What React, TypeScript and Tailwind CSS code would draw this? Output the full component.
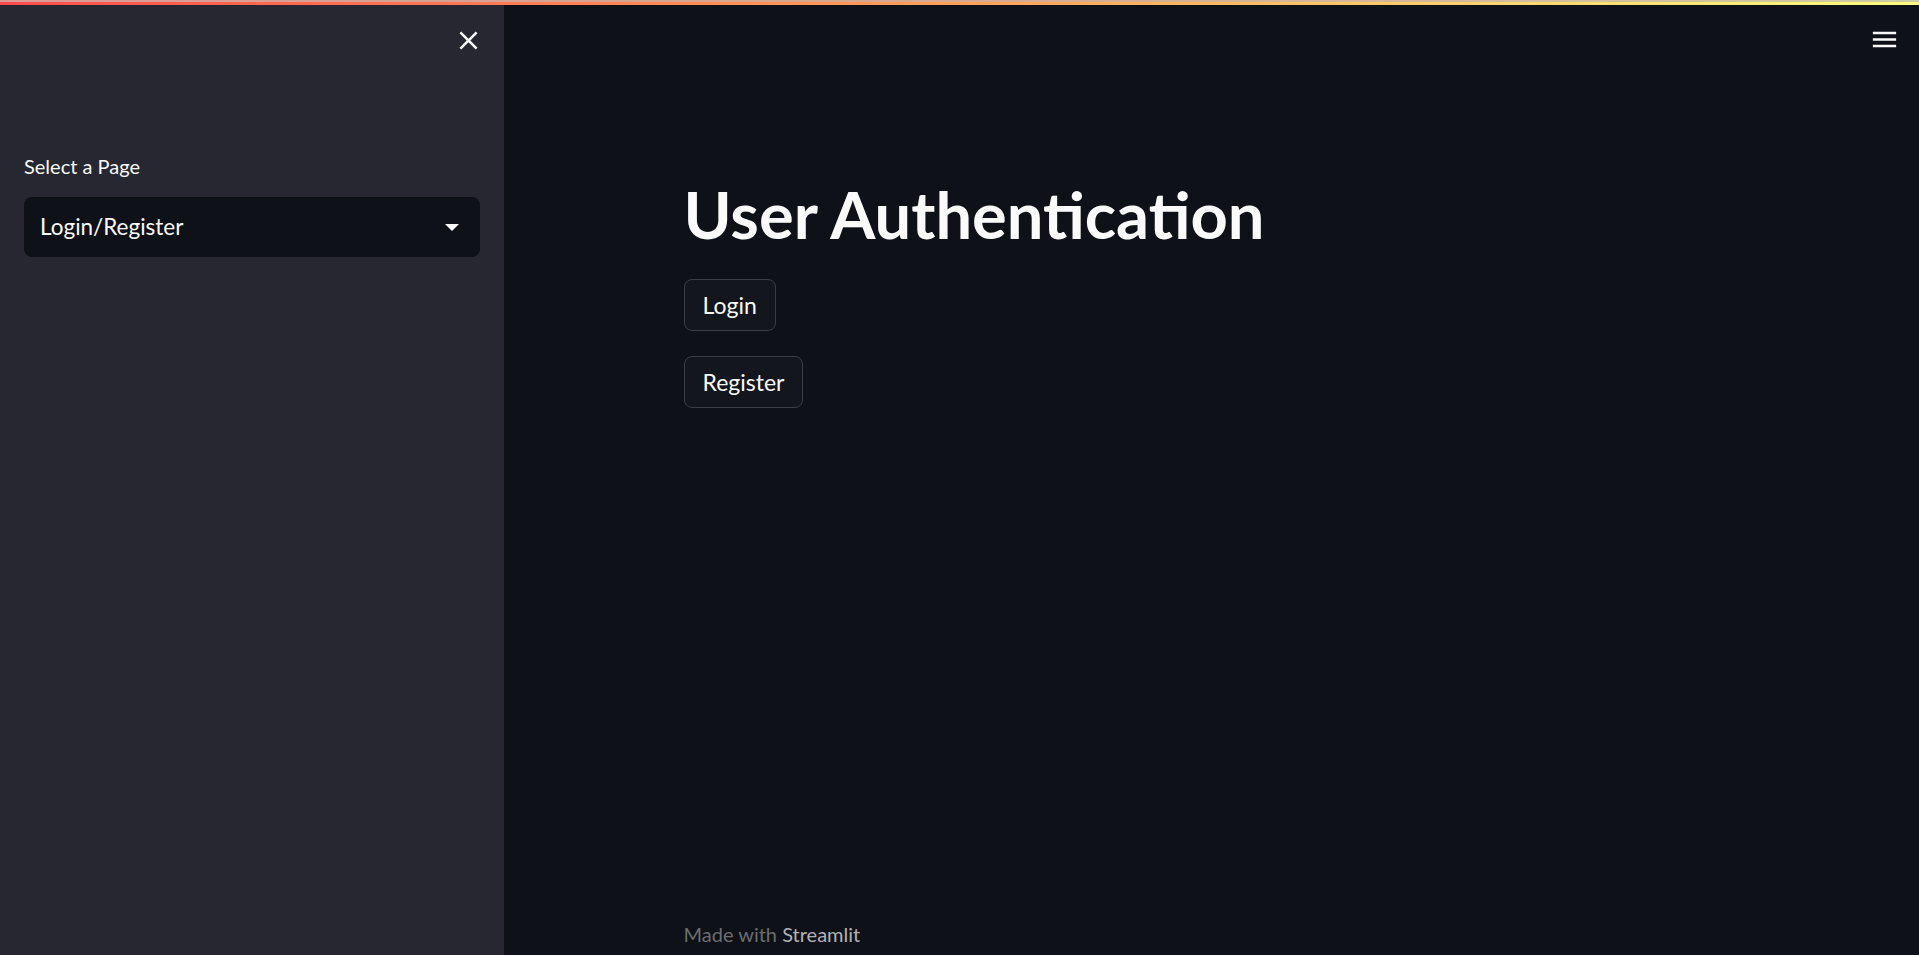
export default function App() {
  return (
    <div className="relative flex h-[955px] w-full overflow-hidden bg-[#0e1117] font-['Lato',sans-serif] text-[#fafafa]">
      {/* top decoration stripe */}
      <div className="absolute left-0 right-0 top-0 z-10 flex flex-col">
        <div className="h-[2px] bg-gradient-to-r from-[#d99c9a] via-[#d9a98f] to-[#cfcba0]" />
        <div className="h-[3px] bg-gradient-to-r from-[#ff4b4b] via-[#ffa05a] to-[#fffd80]" />
      </div>

      <aside className="flex w-[504px] shrink-0 flex-col bg-[#262730] px-[24px]">
        <div className="flex justify-end pt-[25px]">
          <button className="-mr-[4px] flex h-[31px] w-[31px] items-center justify-center">
            <svg viewBox="0 0 24 24" className="h-[31px] w-[31px]" fill="#fafafa">
              <path d="M19 6.41L17.59 5 12 10.59 6.41 5 5 6.41 10.59 12 5 17.59 6.41 19 12 13.41 17.59 19 19 17.59 13.41 12z" />
            </svg>
          </button>
        </div>
        <label className="mt-[95px] block text-[20px] leading-[30px]">Select a Page</label>
        <div className="mt-[16px] flex h-[60px] items-center justify-between rounded-[8px] bg-[#0e1117] pl-[16px] pr-[21px]">
          <span className="text-[22.5px]">Login/Register</span>
          <svg viewBox="0 0 14 7" className="h-[7px] w-[14px]" fill="#fafafa">
            <polygon points="0,0 14,0 7,7" />
          </svg>
        </div>
      </aside>

      <main className="relative flex flex-1 flex-col">
        <button className="absolute right-[19px] top-[24px] h-[31px] w-[31px]">
          <svg viewBox="0 0 24 24" className="h-[31px] w-[31px]" fill="#fafafa">
            <path d="M3 18h18v-2H3v2zm0-5h18v-2H3v2zm0-7v2h18V6H3z" />
          </svg>
        </button>

        <div className="mx-auto flex w-full max-w-[1104px] flex-1 flex-col px-[24px] pt-[175px]">
          <h1 className="text-[65px] font-bold leading-[1.2]">User Authentication</h1>
          <div className="mt-[26px] flex flex-col items-start gap-[25px]">
            <button className="flex h-[52px] items-center rounded-[8px] border border-[#3b3e45] bg-[#13161d] px-[18px] text-[23px]">
              Login
            </button>
            <button className="flex h-[52px] items-center rounded-[8px] border border-[#3b3e45] bg-[#13161d] px-[18px] text-[23px]">
              Register
            </button>
          </div>
          <div className="flex-1" />
          <footer className="pb-[9px] text-[20px] leading-[24px] text-[#6b6d72]">
            Made with <span className="text-[#b0b1b5]">Streamlit</span>
          </footer>
        </div>
      </main>
    </div>
  );
}
